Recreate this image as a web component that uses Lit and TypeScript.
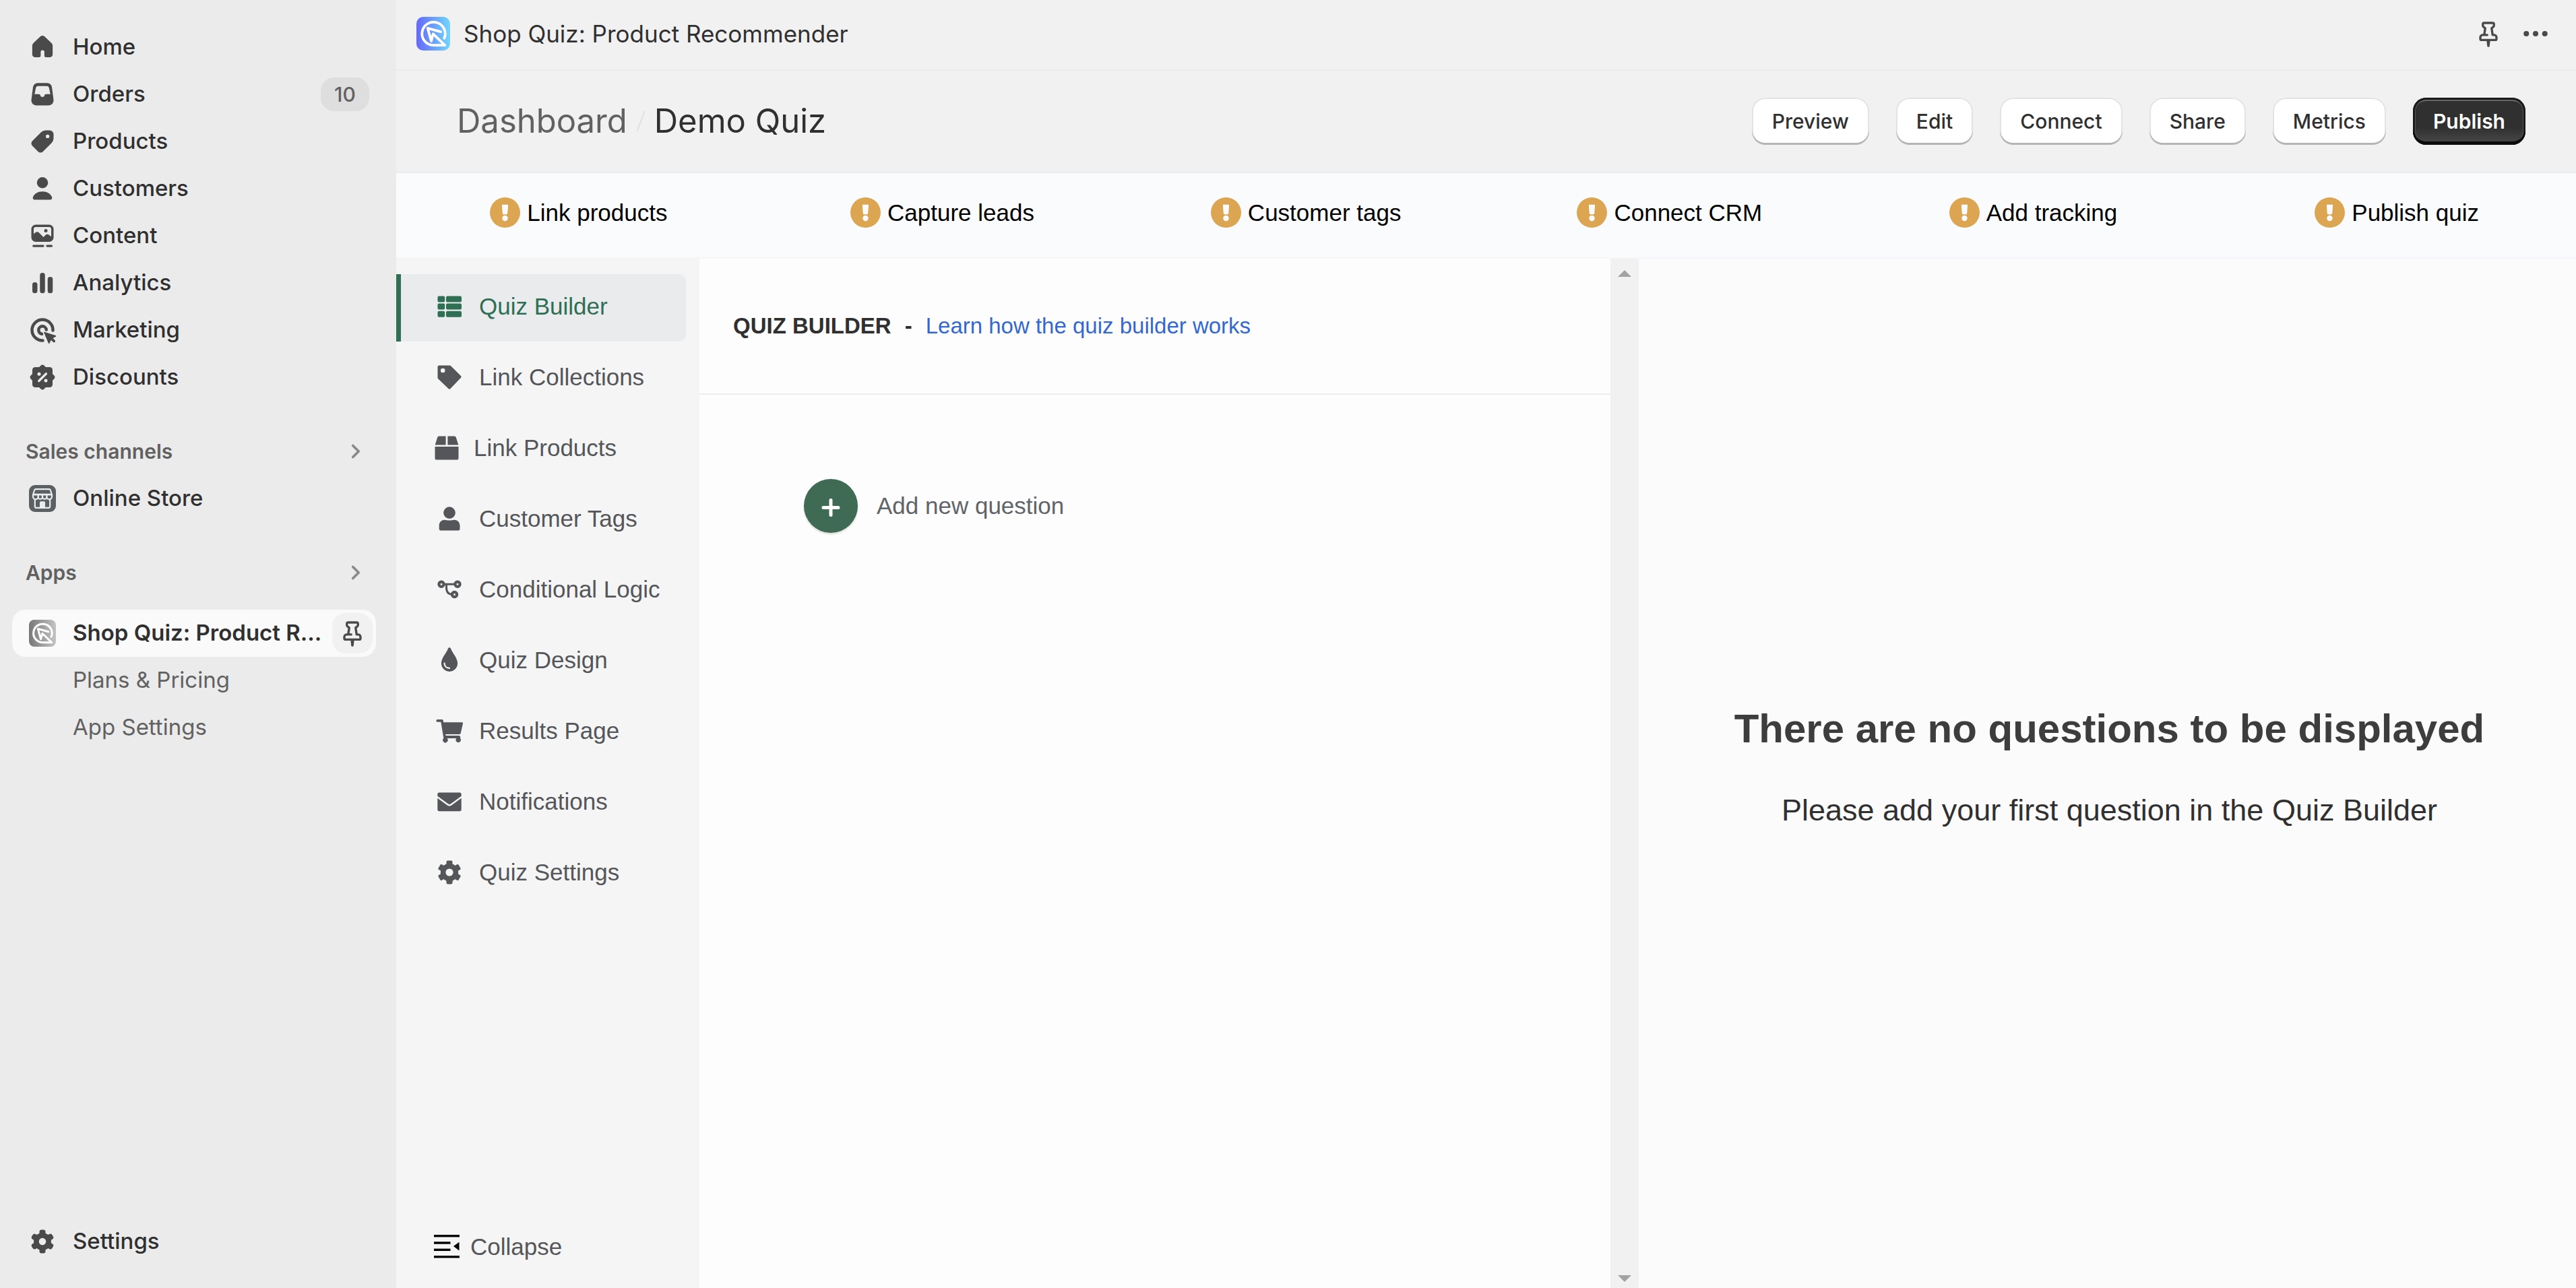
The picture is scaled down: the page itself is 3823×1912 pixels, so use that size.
import { LitElement, html, css, svg, nothing } from "lit";
import { customElement, property, state } from "lit/decorators.js";

const petals = (side: number, half: number, rx: number) =>
  [0, 60, 120].map(
    (a) => svg`<rect x=${-side / 2} y=${-half} width=${side} height=${half * 2} rx=${rx} transform="rotate(${a})" />`
  );

/* 20-unit glyphs used by the admin navigation and the title bar */
const adminGlyphs: Record<string, unknown> = {
  home: svg`<path fill="currentColor" d="M8.6 3.75a2 2 0 0 1 2.8 0l3.9 3.7a2.4 2.4 0 0 1 .75 1.75v5.05a1.7 1.7 0 0 1-1.7 1.7h-2.2a1 1 0 0 1-1-1v-2.1a1.1 1.1 0 0 0-2.2 0v2.1a1 1 0 0 1-1 1h-2.3a1.7 1.7 0 0 1-1.7-1.7V9.2a2.4 2.4 0 0 1 .75-1.75z"/>`,
  orders: svg`<path fill="currentColor" fill-rule="evenodd" d="M7.1 3.3h5.8a2.7 2.7 0 0 1 2.7 2.4l1 7.6a2.9 2.9 0 0 1-2.9 3.3H6.3a2.9 2.9 0 0 1-2.9-3.3l1-7.6a2.7 2.7 0 0 1 2.7-2.4zm.2 1.8a1.2 1.2 0 0 0-1.2 1L5.3 9.9h2.5c.6 0 .9.3 1 .8.1.5.4.9 1.2.9s1.1-.4 1.2-.9c.1-.5.4-.8 1-.8h2.5l-.8-3.8a1.2 1.2 0 0 0-1.2-1z"/>`,
  products: svg`<path fill="currentColor" fill-rule="evenodd" d="M11.9 3.4h2.4a2.3 2.3 0 0 1 2.3 2.3v2.4a4 4 0 0 1-1.17 2.83l-5.1 5.1a2.1 2.1 0 0 1-2.95 0L4 12.6a2.1 2.1 0 0 1 0-2.95l5.1-5.1A4 4 0 0 1 11.9 3.4zm1.15 2.5a1.05 1.05 0 1 0 0 2.1 1.05 1.05 0 0 0 0-2.1z"/>`,
  customers: svg`<circle cx="10" cy="6.5" r="3.3" fill="currentColor"/><path fill="currentColor" d="M10 11.7c2.7 0 4.7 1.2 5.6 3.2.4.9-.2 1.7-1 1.7H5.4c-.8 0-1.4-.8-1-1.7.9-2 2.9-3.2 5.6-3.2z"/>`,
  content: svg`<path fill="currentColor" fill-rule="evenodd" d="M6 3.4h8a2.6 2.6 0 0 1 2.6 2.6v5a2.6 2.6 0 0 1-2.6 2.6H6A2.6 2.6 0 0 1 3.4 11V6A2.6 2.6 0 0 1 6 3.4zm0 1.4c-.7 0-1.2.5-1.2 1.2v2.9l1-.8c.7-.6 1.6-.5 2.2.1l2.6 2.6 1.2-1.2c.6-.6 1.5-.6 2.1-.1l1.3 1V6c0-.7-.5-1.2-1.2-1.2z"/><circle cx="12" cy="7" r="1" fill="currentColor"/><path d="M4.7 16h5.7M12.8 16h2.6" stroke="currentColor" stroke-width="1.3" stroke-linecap="round"/>`,
  analytics: svg`<g fill="currentColor"><rect x="4" y="9.6" width="3" height="6.5" rx="1.4"/><rect x="8.5" y="4" width="3" height="12.1" rx="1.4"/><rect x="13.1" y="6.4" width="3" height="9.7" rx="1.4"/></g>`,
  marketing: svg`<g fill="none" stroke="currentColor" stroke-width="1.8" stroke-linecap="round"><path d="M10.2 16.2a6.2 6.2 0 1 1 6-6"/><path d="M9.6 12.3a2.3 2.3 0 1 1 2.7-2.5"/></g><path fill="currentColor" d="M11.2 11.1l6.6 2.1c.4.1.4.6 0 .8l-1.6.8 1.2 1.2c.3.3.3.8 0 1.1-.3.3-.8.3-1.1 0l-1.2-1.2-.8 1.8c-.2.4-.7.4-.8 0l-2.6-6.2c-.1-.3 0-.5.3-.4z"/>`,
  discounts: svg`<g fill="currentColor"><rect x="4" y="4" width="12" height="12" rx="1.7"/><rect x="4.4" y="4.4" width="11.2" height="11.2" rx="1.5" transform="rotate(45 10 10)"/></g><path d="M7.9 12.2l4.3-4.3" stroke="#ebebeb" stroke-width="1.3" stroke-linecap="round"/><circle cx="8" cy="8.1" r="1" fill="#ebebeb"/><circle cx="12" cy="12" r="1" fill="#ebebeb"/>`,
  gear: svg`<g fill="currentColor" transform="translate(10 10)"><circle r="5.2"/>${petals(3.6, 7, 1.3)}</g><circle cx="10" cy="10" r="2.1" fill="#ebebeb"/>`,
  pin: svg`<path fill="none" stroke="currentColor" stroke-width="1.35" stroke-linecap="round" stroke-linejoin="round" d="M9.3 10.75H6.6a1.4 1.4 0 0 0-1.4 1.4v.9c0 .4.3.7.7.7h8.2c.4 0 .7-.3.7-.7v-.9a1.4 1.4 0 0 0-1.4-1.4h-.9l-.6-4 .8-.6c.4-.3.6-.6.6-1v-.8a.75.75 0 0 0-.75-.75h-5.1a.75.75 0 0 0-.75.75v.8c0 .4.2.7.6 1l.8.6-.6 4"/><path fill="currentColor" d="M8.9 14h2.2l-.4 3.4c-.1.7-1.3.7-1.4 0z"/>`,
  dots: svg`<g fill="currentColor"><circle cx="4.5" cy="10" r="1.6"/><circle cx="10" cy="10" r="1.6"/><circle cx="15.5" cy="10" r="1.6"/></g>`,
  chevron: svg`<path fill="none" stroke="currentColor" stroke-width="1.5" stroke-linecap="round" stroke-linejoin="round" d="M8.300 6.600l3.400 3.400-3.400 3.400"/>`,
};

/* 40-unit glyphs used by the quiz sections menu */
const quizGlyphs: Record<string, unknown> = {
  list: svg`<g fill="currentColor">${[4.6, 15.6, 26.8].map(
    (y) => svg`<rect x="2.5" y=${y} width="10.7" height="9" rx="2"/><rect x="15" y=${y} width="23" height="9" rx="2"/>`
  )}</g>`,
  tag: svg`<path fill="currentColor" fill-rule="evenodd" d="M4.5 2.5h15.8a3 3 0 0 1 2.1.9L37 18a2 2 0 0 1 0 2.8L21.4 37a2 2 0 0 1-2.8 0L3.4 22.6a3 3 0 0 1-.9-2.1v-16a2 2 0 0 1 2-2zM10.2 6.7a3.3 3.3 0 1 0 0 6.6 3.3 3.3 0 0 0 0-6.6z"/>`,
  box: svg`<path fill="currentColor" d="M8.600 2.500h10v12.900H2.700l3.500-11.200a2.500 2.500 0 0 1 2.400-1.700zM21.400 2.500h10a2.500 2.500 0 0 1 2.400 1.700l3.500 11.200H21.400zM2.500 17.900h35v17a2.600 2.600 0 0 1-2.600 2.600H5.100a2.600 2.600 0 0 1-2.600-2.600z"/>`,
  person: svg`<circle cx="20" cy="11.1" r="8.8" fill="currentColor"/><path fill="currentColor" d="M12.500 21.700c2.500 0 4 .9 7.500.9s5-.9 7.500-.9c4.500 0 8 3.600 8 8.600v4.400a2.800 2.800 0 0 1-2.800 2.800H7.500a2.800 2.800 0 0 1-2.800-2.800v-4.400c0-5 3.300-8.600 7.800-8.600z"/>`,
  logic: svg`<g fill="none" stroke="currentColor"><g stroke-width="4.2"><circle cx="8" cy="12.2" r="3.6"/><circle cx="32" cy="12.2" r="3.6"/><circle cx="27.5" cy="27.5" r="3.6"/></g><path stroke-width="3" d="M11 12.200h18M15.500 12.200v5c0 6 2.500 10 9 10"/></g>`,
  drop: svg`<path fill="currentColor" d="M20 1.200c1 0 1.700.6 2.100 1.700C24.500 9.500 32.100 16.500 32.100 24.800a12.100 12.100 0 0 1-24.200 0C7.900 16.500 15.500 9.500 17.900 2.900c.4-1.100 1.100-1.700 2.100-1.700z"/><path fill="none" stroke="#f5f5f5" stroke-width="2.2" stroke-linecap="round" d="M12.600 24.700c0 4 3 7 7.400 7.200"/>`,
  cart: svg`<path fill="currentColor" d="M2.300 2.900h6.500c1 0 1.700.5 1.900 1.500l.5 2.800h27.300c1 0 1.700.9 1.500 1.800l-3.300 14.600a2 2 0 0 1-1.900 1.500H14.200l.3 1.900h19.200c2.500 0 3.100 2.500 2.300 4a3.700 3.700 0 1 1-5.700 0H16.400a3.700 3.700 0 1 1-5 0L7.300 6.800h-5a1.900 1.900 0 0 1 0-3.900z"/>`,
  mail: svg`<path fill="currentColor" d="M5 6.400h30a2.700 2.700 0 0 1 2.700 2.700v2.700L22 23.300a3.400 3.400 0 0 1-4 0L2.300 11.800V9.100A2.700 2.700 0 0 1 5 6.400zM2.300 14.800L16.600 25.300a5.700 5.700 0 0 0 6.800 0L37.700 14.800v16.700a2.700 2.700 0 0 1-2.700 2.700H5a2.700 2.700 0 0 1-2.700-2.700z"/>`,
  gear: svg`<g fill="currentColor" transform="translate(20 20)"><circle r="13.2"/>${petals(9, 17.4, 1.8)}</g><circle cx="20" cy="20" r="5.6" fill="#f5f5f5"/>`,
  collapse: svg`<g fill="#000"><rect x="1" y="2" width="38" height="3.4"/><rect x="1" y="12.3" width="24.5" height="3.4"/><rect x="1" y="22.6" width="24.5" height="3.4"/><rect x="1" y="33" width="38" height="3.4"/><path d="M38.500 12.800v12.600L30 19.100z"/></g>`,
};

const adminIcon = (name: string) =>
  html`<svg class="icon-admin" viewBox="0 0 20 20" aria-hidden="true">${adminGlyphs[name]}</svg>`;
const quizIcon = (name: string) =>
  html`<svg class="icon-quiz" viewBox="0 0 40 40" aria-hidden="true">${quizGlyphs[name]}</svg>`;

@customElement("app-logo")
export class AppLogo extends LitElement {
  @property({ type: Boolean }) muted = false;

  static styles = css`
    :host { display: block; flex: none; }
    .mark { display: block; width: 100%; height: 100%; }
  `;

  render() {
    const [from, to] = this.muted ? ["#787878", "#c4c4c4"] : ["#6467fb", "#72d6fd"];
    return html`<svg class="mark" viewBox="0 0 50 50" aria-hidden="true">
      <defs>
        <linearGradient id="fade" x1="0" y1="0" x2="1" y2="0">
          <stop offset="0" stop-color=${from} />
          <stop offset="1" stop-color=${to} />
        </linearGradient>
      </defs>
      <rect width="50" height="50" rx="10" fill="url(#fade)" />
      <path
        d="M41.300 31.800A17.200 17.200 0 1 0 25 42.200H42.300L24.800 25.300 22 36 16.700 16.800 36 22.200"
        fill="none" stroke="#fff" stroke-width="3.8" stroke-linecap="round" stroke-linejoin="round" />
    </svg>`;
  }
}

@customElement("admin-nav")
export class AdminNav extends LitElement {
  private primary = [
    { icon: "home", label: "Home" },
    { icon: "orders", label: "Orders", badge: "10" },
    { icon: "products", label: "Products" },
    { icon: "customers", label: "Customers" },
    { icon: "content", label: "Content" },
    { icon: "analytics", label: "Analytics" },
    { icon: "marketing", label: "Marketing" },
    { icon: "discounts", label: "Discounts" },
  ];

  static styles = css`
    :host {
      display: flex;
      flex-direction: column;
      box-sizing: border-box;
      padding: 35px 30px 34px 18px;
      background: #ebebeb;
      color: #303030;
      font: 500 33px/40px Inter, "Liberation Sans", sans-serif;
    }
    a { color: inherit; text-decoration: none; }
    button { border: 0; padding: 0; background: none; color: inherit; font: inherit; cursor: pointer; }
    .icon-admin { display: block; flex: none; width: 50px; height: 50px; color: #4a4a4a; }
    .row {
      display: flex;
      align-items: center;
      gap: 20px;
      height: 70px;
      padding: 0 10px 0 20px;
      border-radius: 20px;
    }
    .label { flex: 1; min-width: 0; padding-bottom: 2px; white-space: nowrap; }
    .badge {
      width: 72px;
      border-radius: 20px;
      background: #dedede;
      color: #616161;
      font-size: 30px;
      line-height: 50px;
      text-align: center;
    }
    .section {
      display: flex;
      align-items: center;
      justify-content: space-between;
      height: 70px;
      margin-top: 40px;
      padding: 0 5px 0 20px;
      color: #616161;
      font-size: 30px;
      font-weight: 600;
    }
    .section .icon-admin { color: #8a8a8a; }
    .tile { display: block; flex: none; width: 40px; height: 40px; margin: 0 5px; }
    .current { margin-top: 20px; padding-right: 5px; background: #fafafa; font-weight: 600; }
    .unpin {
      display: grid;
      place-items: center;
      width: 60px;
      height: 60px;
      border-radius: 20px;
      background: #f1f1f1;
    }
    .sub { padding-left: 90px; color: #616161; font-weight: 400; }
    .spacer { flex: 1; }
  `;

  render() {
    return html`
      ${this.primary.map(
        (item) => html`<a class="row" href="#">
          ${adminIcon(item.icon)}<span class="label">${item.label}</span>
          ${item.badge ? html`<span class="badge">${item.badge}</span>` : nothing}
        </a>`
      )}
      <button class="section" type="button">Sales channels ${adminIcon("chevron")}</button>
      <a class="row" href="#">
        <svg class="tile" viewBox="0 0 40 40" aria-hidden="true">
          <rect width="40" height="40" rx="9" fill="#5b6063" />
          <g fill="none" stroke="#ebebeb" stroke-width="2.2" stroke-linejoin="round">
            <path d="M10.500 6.200h19c1.400 0 2.300.8 2.600 2.100L34 14.500v2.700a4 4 0 0 1-3.800 4h-.4a4 4 0 0 1-3.300-2 4 4 0 0 1-6.500 0 4 4 0 0 1-6.500 0 4 4 0 0 1-3.300 2h-.4a4 4 0 0 1-3.800-4v-2.700l1.900-6.200c.3-1.300 1.200-2.100 2.600-2.100z" />
            <path d="M8.800 21.500v10.300a2 2 0 0 0 2 2h18.400a2 2 0 0 0 2-2V21.500" />
          </g>
          <path d="M6 12.800h28v2.600H6zM12.500 14.500h2.400v5h-2.400zM18.800 14.500h2.400v5h-2.400zM25.200 14.500h2.400v5h-2.400z" fill="#ebebeb" />
          <path d="M16 33v-7.200a1.600 1.600 0 0 1 1.600-1.600h4.800a1.600 1.600 0 0 1 1.600 1.600V33z" fill="#ebebeb" />
        </svg>
        <span class="label">Online Store</span>
      </a>
      <button class="section" type="button">Apps ${adminIcon("chevron")}</button>
      <div class="row current">
        <app-logo class="tile" muted></app-logo>
        <a class="label" href="#">Shop Quiz: Product R…</a>
        <button class="unpin" type="button" aria-label="Unpin app">${adminIcon("pin")}</button>
      </div>
      <a class="row sub" href="#"><span class="label">Plans &amp; Pricing</span></a>
      <a class="row sub" href="#"><span class="label">App Settings</span></a>
      <span class="spacer"></span>
      <a class="row" href="#">${adminIcon("gear")}<span class="label">Settings</span></a>
    `;
  }
}

@customElement("quiz-menu")
export class QuizMenu extends LitElement {
  @state() private active = "Quiz Builder";

  private items = [
    { icon: "list", label: "Quiz Builder" },
    { icon: "tag", label: "Link Collections" },
    { icon: "box", label: "Link Products", tight: true },
    { icon: "person", label: "Customer Tags" },
    { icon: "logic", label: "Conditional Logic" },
    { icon: "drop", label: "Quiz Design" },
    { icon: "cart", label: "Results Page" },
    { icon: "mail", label: "Notifications" },
    { icon: "gear", label: "Quiz Settings" },
  ];

  static styles = css`
    :host {
      display: flex;
      flex-direction: column;
      gap: 5px;
      box-sizing: border-box;
      padding: 23px 20px 36px 0;
      background: #f5f5f5;
    }
    button {
      display: flex;
      align-items: center;
      gap: 24px;
      box-sizing: border-box;
      height: 100px;
      padding: 0 0 5px 52px;
      border: 0;
      border-left: 7px solid transparent;
      background: none;
      color: #54565a;
      font: 400 35px/40px "Liberation Sans", Arial, sans-serif;
      text-align: left;
      white-space: nowrap;
      cursor: pointer;
    }
    .icon-quiz { display: block; flex: none; width: 40px; height: 40px; }
    .tight { gap: 20px; padding-left: 48px; }
    .active {
      border-left-color: #2f6f54;
      border-radius: 0 10px 10px 0;
      background: #e9ebec;
      color: #2f6f54;
    }
    .collapse { gap: 15px; height: 50px; padding: 0 0 0 48px; margin-top: auto; }
  `;

  render() {
    return html`
      ${this.items.map(
        (item) => html`<button
          type="button"
          class="${item.tight ? "tight" : ""} ${item.label === this.active ? "active" : ""}"
          @click=${() => (this.active = item.label)}
        >${quizIcon(item.icon)}${item.label}</button>`
      )}
      <button class="collapse" type="button">${quizIcon("collapse")}Collapse</button>
    `;
  }
}

@customElement("app-root")
export class AppRoot extends LitElement {
  private actions = ["Preview", "Edit", "Connect", "Share", "Metrics"];
  private steps = ["Link products", "Capture leads", "Customer tags", "Connect CRM", "Add tracking", "Publish quiz"];

  static styles = css`
    :host {
      display: flex;
      min-height: 100vh;
      background: #f1f1f1;
      color: #303030;
      font: 400 35px/40px "Liberation Sans", Arial, sans-serif;
    }
    h1, h2, h3, p { margin: 0; font: inherit; }
    a { text-decoration: none; }
    button { border: 0; padding: 0; background: none; color: inherit; cursor: pointer; }
    .nav { flex: 0 0 588px; min-width: 0; }
    .main { display: flex; flex: 1; flex-direction: column; min-width: 0; }
    .icon-admin { display: block; width: 50px; height: 50px; color: #4a4a4a; }

    .title-bar {
      display: flex;
      align-items: center;
      gap: 20px;
      height: 103px;
      padding: 0 35px 3px 30px;
      box-sizing: border-box;
      font: 400 35px/40px Inter, "Liberation Sans", sans-serif;
    }
    .logo { width: 50px; height: 50px; }
    .title { flex: 1; }

    .page-bar {
      display: flex;
      align-items: center;
      height: 154px;
      padding: 0 75px 0 90px;
      box-sizing: border-box;
      border-top: 2px solid #ebebeb;
      border-bottom: 2px solid #ebebeb;
      font: 400 49px/60px Inter, "Liberation Sans", sans-serif;
    }
    .crumbs { display: flex; flex: 1; align-items: center; gap: 13px; }
    .crumb { color: #616161; }
    .slash { width: 14px; height: 32px; }
    .actions { display: flex; gap: 40px; }
    .action {
      height: 70px;
      padding: 0 30px;
      border-radius: 20px;
      background: #fff;
      box-shadow: inset 0 -3px 0 #b5b5b5, inset 0 0 0 2px #e3e3e3;
      font: 500 30px/40px Inter, "Liberation Sans", sans-serif;
    }
    .publish {
      background: linear-gradient(#303030 63%, #4a4a4a);
      box-shadow: inset 0 -5px 0 #0d0d0d, inset 0 0 0 3px #1a1a1a, inset 0 5px 0 #666, inset 0 0 0 4px #555;
      color: #fff;
      font-weight: 600;
    }

    .steps {
      display: grid;
      grid-template-columns: repeat(6, 1fr);
      column-gap: 8px;
      height: 127px;
      padding: 0 0 8px 5px;
      box-sizing: border-box;
      border-bottom: 2px solid #f5f6f8;
      background: #fafbfd;
      color: #000;
    }
    .step { display: flex; align-items: center; justify-content: center; gap: 10px; }
    .alert { width: 45px; height: 45px; }

    .work { display: flex; flex: 1; }
    .menu { flex: 0 0 450px; }
    .editor { flex: 1; background: #fdfdfd; }
    .editor-head {
      display: flex;
      align-items: center;
      gap: 20px;
      height: 202px;
      padding: 0 50px;
      box-sizing: border-box;
      border-bottom: 2px solid #ededed;
      font-size: 33px;
    }
    .editor-title { font-weight: 700; }
    .learn { color: #3468d1; }
    .add {
      display: flex;
      align-items: center;
      gap: 28px;
      margin: 125px 0 0 155px;
      color: #616468;
      font: inherit;
    }
    .plus {
      display: block;
      width: 80px;
      height: 80px;
      border-radius: 50%;
      background: #3f6b54;
      box-shadow: 0 2px 3px rgba(0, 0, 0, 0.15);
    }
    .scrollbar {
      display: flex;
      flex-direction: column;
      justify-content: space-between;
      align-items: center;
      width: 42px;
      padding: 17px 0 9px;
      box-sizing: border-box;
      background: #f1f1f1;
    }
    .arrow { width: 20px; height: 10px; }
    .preview {
      display: flex;
      flex: 0 0 43%;
      flex-direction: column;
      align-items: center;
      justify-content: center;
      gap: 58px;
      box-sizing: border-box;
      padding: 0 0 20px 6px;
      background: #fbfbfb;
    }
    .empty-title { color: #3d3d3d; font-size: 60px; font-weight: 700; line-height: 72px; }
    .empty-text { font-size: 45px; line-height: 54px; }
  `;

  render() {
    return html`
      <admin-nav class="nav"></admin-nav>
      <div class="main">
        <header class="title-bar">
          <app-logo class="logo"></app-logo>
          <h1 class="title">Shop Quiz: Product Recommender</h1>
          <button type="button" aria-label="Pin app">${adminIcon("pin")}</button>
          <button type="button" aria-label="More actions">${adminIcon("dots")}</button>
        </header>
        <div class="page-bar">
          <div class="crumbs">
            <a class="crumb" href="#">Dashboard</a>
            <svg class="slash" viewBox="0 0 14 32" aria-hidden="true">
              <path d="M12.500 1L1.500 31" stroke="#e0e0e0" stroke-width="2" />
            </svg>
            <h2>Demo Quiz</h2>
          </div>
          <div class="actions">
            ${this.actions.map((a) => html`<button class="action" type="button">${a}</button>`)}
            <button class="action publish" type="button">Publish</button>
          </div>
        </div>
        <div class="steps">
          ${this.steps.map(
            (s) => html`<div class="step">
              <svg class="alert" viewBox="0 0 45 45" aria-hidden="true">
                <circle cx="22.5" cy="22.5" r="22.5" fill="#dba552" />
                <path d="M19.200 10.800h6.600c.9 0 1.400.5 1.300 1.400l-.9 11.600c-.1.900-.6 1.400-1.400 1.400h-4.600c-.8 0-1.300-.5-1.400-1.400l-.9-11.600c-.1-.9.4-1.400 1.300-1.400z" fill="#fafbfd" />
                <circle cx="22.5" cy="31" r="4.2" fill="#fafbfd" />
              </svg>
              ${s}
            </div>`
          )}
        </div>
        <div class="work">
          <quiz-menu class="menu"></quiz-menu>
          <section class="editor">
            <div class="editor-head">
              <h3 class="editor-title">QUIZ BUILDER</h3>
              <span class="editor-title">-</span>
              <a class="learn" href="#">Learn how the quiz builder works</a>
            </div>
            <button class="add" type="button">
              <svg class="plus" viewBox="0 0 80 80" aria-hidden="true">
                <path d="M40 31.500v22M29 42.500h22" stroke="#fff" stroke-width="5" stroke-linecap="round" />
              </svg>
              Add new question
            </button>
          </section>
          <div class="scrollbar">
            <svg class="arrow" viewBox="0 0 20 10" aria-hidden="true"><path d="M0 10L10 0l10 10z" fill="#a3a3a3" /></svg>
            <svg class="arrow" viewBox="0 0 20 10" aria-hidden="true"><path d="M0 0l10 10L20 0z" fill="#a3a3a3" /></svg>
          </div>
          <section class="preview">
            <h2 class="empty-title">There are no questions to be displayed</h2>
            <p class="empty-text">Please add your first question in the Quiz Builder</p>
          </section>
        </div>
      </div>
    `;
  }
}
